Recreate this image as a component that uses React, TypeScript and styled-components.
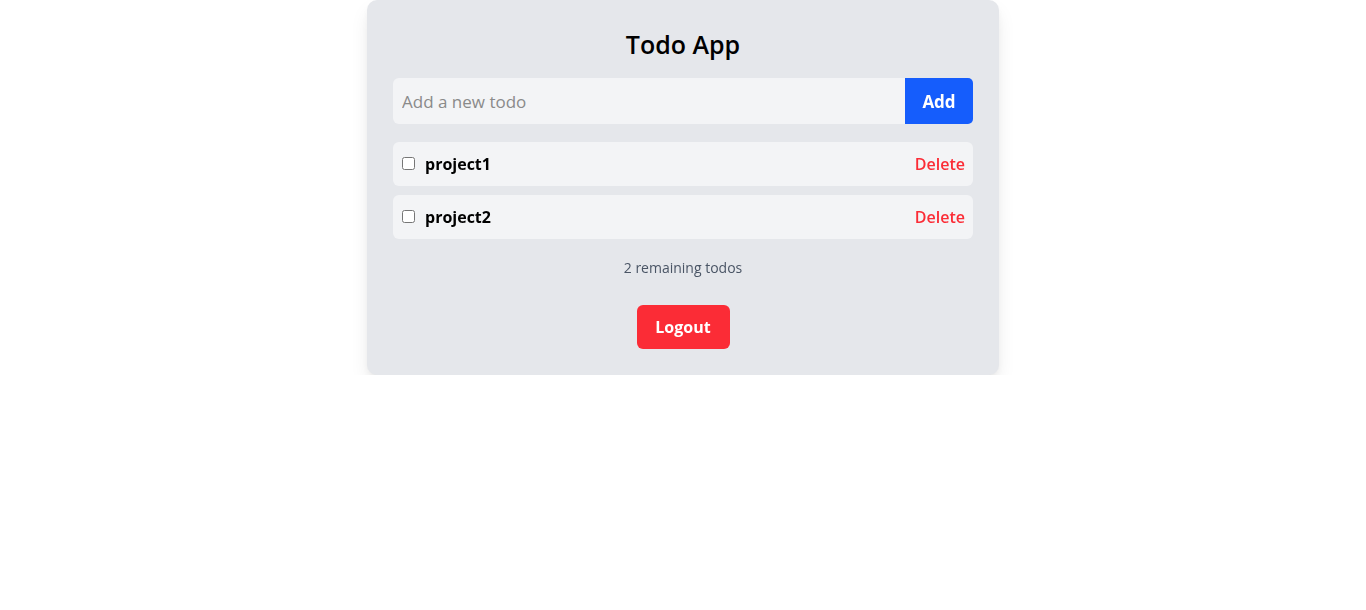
import React, { useState } from 'react'
import styled, { createGlobalStyle } from 'styled-components'

const GlobalStyle = createGlobalStyle`
  body {
    margin: 0;
    background: #ffffff;
    font-family: 'Open Sans', 'Noto Sans', sans-serif;
  }
`

const Page = styled.div`
  display: flex;
  justify-content: center;
`

const Card = styled.div`
  width: 632px;
  box-sizing: border-box;
  padding: 26px;
  background-color: #e5e7eb;
  border-radius: 10px;
  box-shadow: 0 10px 20px -3px rgba(0, 0, 0, 0.1), 0 4px 8px -4px rgba(0, 0, 0, 0.1);
  display: flex;
  flex-direction: column;
`

const Title = styled.h1`
  margin: 0 0 16px;
  font-size: 25px;
  line-height: 36px;
  font-weight: 600;
  text-align: center;
  color: #000;
`

const Form = styled.form`
  display: flex;
  height: 46px;
  margin-bottom: 18px;
`

const Input = styled.input`
  flex: 1;
  min-width: 0;
  border: none;
  outline: none;
  background-color: #f3f4f6;
  border-radius: 6px 0 0 6px;
  padding: 0 9px;
  font-family: inherit;
  font-size: 17px;
  color: #111;

  &::placeholder {
    color: #8a8a8a;
  }
`

const AddButton = styled.button`
  width: 68px;
  border: none;
  background-color: #155dfc;
  color: #fff;
  font-family: inherit;
  font-size: 17px;
  font-weight: 700;
  border-radius: 0 5px 5px 0;
  cursor: pointer;
`

const List = styled.ul`
  list-style: none;
  margin: 0;
  padding: 0;
  display: flex;
  flex-direction: column;
  gap: 9px;
`

const Row = styled.li`
  height: 44px;
  display: flex;
  align-items: center;
  padding: 0 8px 0 9px;
  background-color: #f3f4f6;
  border-radius: 6px;
`

const Check = styled.input`
  width: 13px;
  height: 13px;
  margin: 0 10px 2px 0;
`

const Label = styled.span<{ $done: boolean }>`
  flex: 1;
  font-size: 16px;
  font-weight: 700;
  color: #000;
  text-decoration: ${(p) => (p.$done ? 'line-through' : 'none')};
`

const DeleteButton = styled.button`
  border: none;
  background: none;
  padding: 0;
  color: #fb2c36;
  font-family: inherit;
  font-size: 16px;
  font-weight: 600;
  cursor: pointer;
`

const Remaining = styled.p`
  margin: 19px 0 0;
  font-size: 14px;
  line-height: 20px;
  text-align: center;
  color: #4a5565;
`

const LogoutButton = styled.button`
  align-self: center;
  margin-top: 27px;
  width: 93px;
  height: 44px;
  border: none;
  border-radius: 6px;
  background-color: #fb2c36;
  color: #fff;
  font-family: inherit;
  font-size: 16px;
  font-weight: 700;
  cursor: pointer;
`

interface Todo {
  id: number
  text: string
  done: boolean
}

export default function App() {
  const [todos, setTodos] = useState<Todo[]>([
    { id: 1, text: 'project1', done: false },
    { id: 2, text: 'project2', done: false },
  ])
  const [value, setValue] = useState('')

  const remaining = todos.filter((t) => !t.done).length

  return (
    <Page>
      <GlobalStyle />
      <Card>
        <Title>Todo App</Title>
        <Form
          onSubmit={(evt) => {
            evt.preventDefault()
            if (!value.trim()) return
            setTodos([...todos, { id: Date.now(), text: value, done: false }])
            setValue('')
          }}
        >
          <Input
            autoFocus
            placeholder="Add a new todo"
            value={value}
            onChange={(e) => setValue(e.target.value)}
          />
          <AddButton type="submit">Add</AddButton>
        </Form>
        <List>
          {todos.map((todo) => (
            <Row key={todo.id}>
              <Check
                type="checkbox"
                checked={todo.done}
                onChange={() =>
                  setTodos(todos.map((t) => (t.id === todo.id ? { ...t, done: !t.done } : t)))
                }
              />
              <Label $done={todo.done}>{todo.text}</Label>
              <DeleteButton onClick={() => setTodos(todos.filter((t) => t.id !== todo.id))}>
                Delete
              </DeleteButton>
            </Row>
          ))}
        </List>
        <Remaining>{remaining} remaining todos</Remaining>
        <LogoutButton>Logout</LogoutButton>
      </Card>
    </Page>
  )
}
